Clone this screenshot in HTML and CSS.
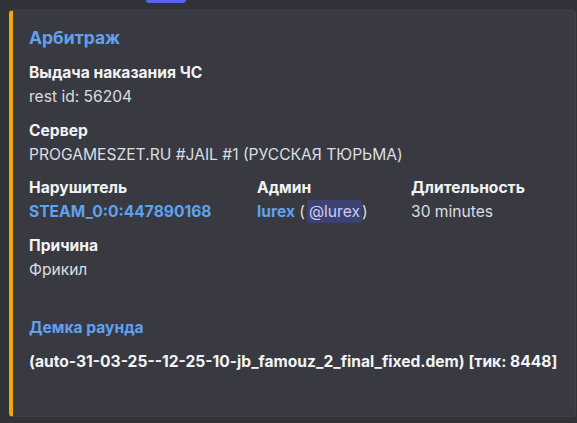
FILE: index.html
```html
<!DOCTYPE html>
<html lang="ru">
<head>
<meta charset="utf-8">
<link rel="stylesheet" href="styles.css">
</head>
<body>
<div class="btn-tail"></div>
<div class="embed">
  <div class="embed-title">Арбитраж</div>
  <div class="fields">
    <div class="field full">
      <div class="fname">Выдача наказания ЧС</div>
      <div class="fvalue">rest id: 56204</div>
    </div>
    <div class="field full">
      <div class="fname">Сервер</div>
      <div class="fvalue">PROGAMESZET.RU #JAIL #1 (РУССКАЯ ТЮРЬМА)</div>
    </div>
    <div class="field">
      <div class="fname">Нарушитель</div>
      <div class="fvalue link">STEAM_0:0:447890168</div>
    </div>
    <div class="field">
      <div class="fname">Админ</div>
      <div class="fvalue"><span class="link">lurex</span> (<span class="mention">@lurex</span>)</div>
    </div>
    <div class="field">
      <div class="fname">Длительность</div>
      <div class="fvalue">30 minutes</div>
    </div>
    <div class="field full">
      <div class="fname">Причина</div>
      <div class="fvalue">Фрикил</div>
    </div>
  </div>
  <div class="demo">
    <div class="demo-title">Демка раунда</div>
    <div class="demo-value">(auto-31-03-25--12-25-10-jb_famouz_2_final_fixed.dem) [тик: 8448]</div>
  </div>
</div>
</body>
</html>
```
FILE: styles.css
```css
html, body {
  margin: 0;
  padding: 0;
  background: #313338;
  height: 100%;
}
body {
  font-family: Inter, "Noto Sans", sans-serif;
  font-size: 15.6px;
  color: #dbdee1;
  overflow: hidden;
}
.btn-tail {
  margin-left: 146px;
  width: 40px;
  height: 3px;
  background: #5865f2;
  border-radius: 0 0 4px 4px;
}
.embed {
  margin: 7px 0 0 9px;
  width: 567px;
  height: 407px;
  box-sizing: border-box;
  background: #393a41;
  border: 1px solid #40414a;
  border-left: 4px solid #f0a70a;
  border-radius: 4px;
  padding: 16px 16px 0 16px;
}
.embed-title {
  font-size: 17.5px;
  line-height: 22px;
  font-weight: 700;
  color: #5fa1ef;
}
.fields {
  margin-top: 14px;
  display: grid;
  grid-template-columns: 220px 146px auto;
  column-gap: 8px;
  row-gap: 13.5px;
}
.field.full {
  grid-column: 1 / -1;
}
.fname {
  font-weight: 700;
  line-height: 20px;
  color: #f2f3f5;
}
.fvalue {
  margin-top: 4px;
  line-height: 20px;
  color: #dbdee1;
  white-space: nowrap;
}
.link {
  color: #5fa1ef;
  font-weight: 700;
}
.mention {
  margin-left: 2px;
  background: #3d4270;
  color: #c9cdfb;
  border-radius: 3px;
  padding: 2px 2px;
}
.demo {
  margin-top: 38px;
}
.demo-title {
  font-weight: 700;
  line-height: 20px;
  color: #5fa1ef;
}
.demo-value {
  margin-top: 14px;
  font-weight: 700;
  line-height: 20px;
  color: #f2f3f5;
  white-space: nowrap;
}
```
